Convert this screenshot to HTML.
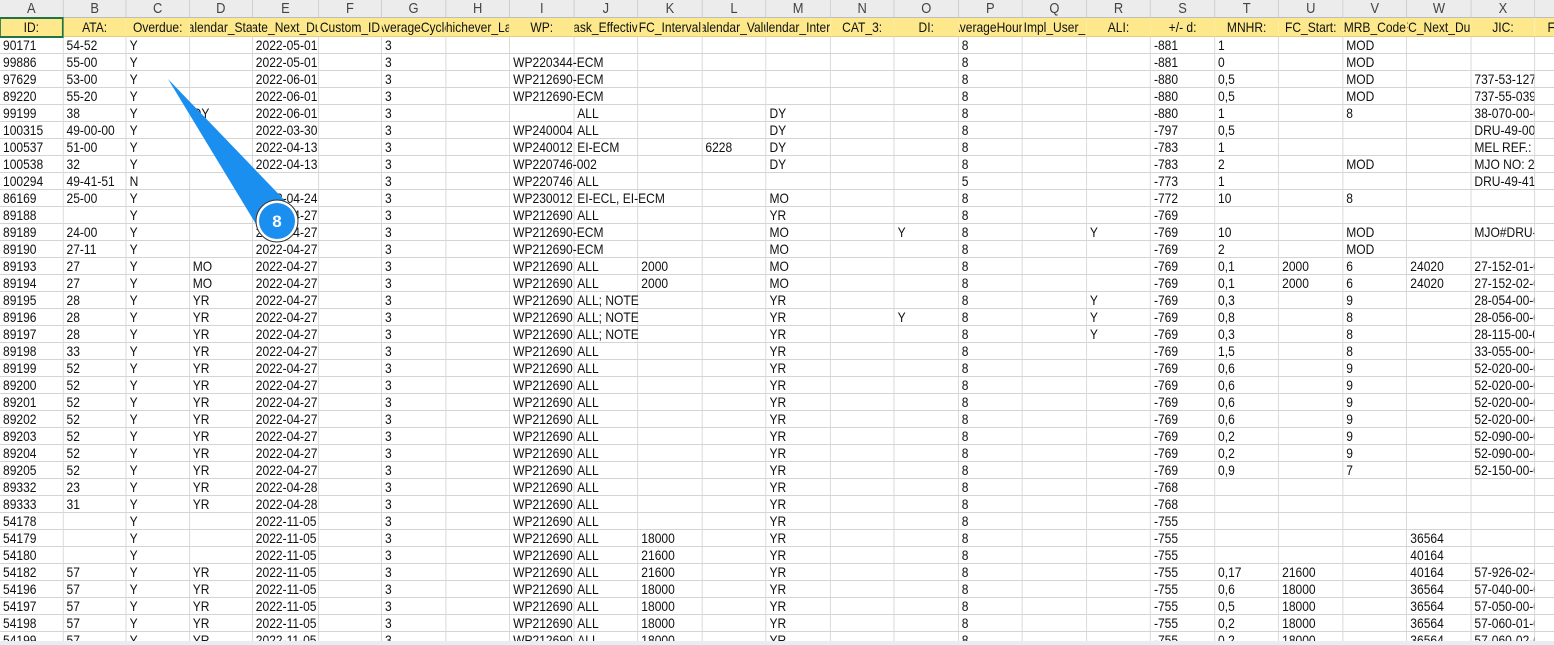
<!DOCTYPE html>
<html><head><meta charset="utf-8">
<style>
html,body{margin:0;padding:0;background:#fff;width:1554px;height:645px;overflow:hidden}
body{position:relative;font-family:"Liberation Sans",Arial,sans-serif}
table{border-collapse:collapse;table-layout:fixed;position:absolute;left:0;top:0;width:1860px;transform:scaleX(0.86);transform-origin:0 0}
td{height:16px;padding:0 0 0 3.5px;border-right:1px solid #d4d4d4;border-bottom:1px solid #d4d4d4;font-size:14px;color:#111;white-space:nowrap;overflow:hidden;line-height:16px}
td.v{overflow:visible}
tr.L td{height:17px;background:#ececec;color:#444;text-align:center;padding:0;font-size:15px;border-right:1px solid #c8c8c8;border-bottom:1px solid #bdbdbd}
tr.H td{height:18px;background:#fde98b;padding:0;border-right:1px solid #fde98b;border-bottom:1px solid #e0cf80}
tr.H td div{display:flex;justify-content:center;overflow:hidden;white-space:nowrap}
tr.H td.sel{outline:2px solid #217346;outline-offset:-1px}
.bot{position:absolute;left:0;top:641px;width:1554px;height:4px;background:#e8edf3}
</style></head><body>
<table>
<colgroup><col style="width:73.26px"><col style="width:73.26px"><col style="width:73.26px"><col style="width:73.26px"><col style="width:76.74px"><col style="width:73.26px"><col style="width:74.42px"><col style="width:74.42px"><col style="width:74.42px"><col style="width:74.42px"><col style="width:74.42px"><col style="width:74.42px"><col style="width:74.42px"><col style="width:74.42px"><col style="width:74.42px"><col style="width:74.42px"><col style="width:74.42px"><col style="width:74.42px"><col style="width:74.42px"><col style="width:74.42px"><col style="width:74.42px"><col style="width:74.42px"><col style="width:74.42px"><col style="width:74.42px"><col style="width:74.42px"></colgroup>
<tr class="L"><td>A</td><td>B</td><td>C</td><td>D</td><td>E</td><td>F</td><td>G</td><td>H</td><td>I</td><td>J</td><td>K</td><td>L</td><td>M</td><td>N</td><td>O</td><td>P</td><td>Q</td><td>R</td><td>S</td><td>T</td><td>U</td><td>V</td><td>W</td><td>X</td><td>Y</td></tr>
<tr class="H"><td class="sel"><div>ID:</div></td><td><div>ATA:</div></td><td><div>Overdue:</div></td><td><div>Calendar_State</div></td><td><div>Date_Next_Due</div></td><td><div>Custom_ID</div></td><td><div>AverageCycle</div></td><td><div>Whichever_Last</div></td><td><div>WP:</div></td><td><div>Task_Effective</div></td><td><div>FC_Interval</div></td><td><div>Calendar_Value</div></td><td><div>Calendar_Interval</div></td><td><div>CAT_3:</div></td><td><div>DI:</div></td><td><div>AverageHours</div></td><td><div>Impl_User_</div></td><td><div>ALI:</div></td><td><div>+/- d:</div></td><td><div>MNHR:</div></td><td><div>FC_Start:</div></td><td><div>MRB_Code</div></td><td><div>FC_Next_Due</div></td><td><div>JIC:</div></td><td style="text-align:left"><div style="justify-content:flex-start;padding-left:14px">FH</div></td></tr>
<tr><td>90171</td><td>54-52</td><td>Y</td><td></td><td>2022-05-01</td><td></td><td>3</td><td></td><td></td><td></td><td></td><td></td><td></td><td></td><td></td><td>8</td><td></td><td></td><td>-881</td><td>1</td><td></td><td>MOD</td><td></td><td></td><td></td></tr>
<tr><td>99886</td><td>55-00</td><td>Y</td><td></td><td>2022-05-01</td><td></td><td>3</td><td></td><td class="v">WP220344-ECM</td><td></td><td></td><td></td><td></td><td></td><td></td><td>8</td><td></td><td></td><td>-881</td><td>0</td><td></td><td>MOD</td><td></td><td></td><td></td></tr>
<tr><td>97629</td><td>53-00</td><td>Y</td><td></td><td>2022-06-01</td><td></td><td>3</td><td></td><td class="v">WP212690-ECM</td><td></td><td></td><td></td><td></td><td></td><td></td><td>8</td><td></td><td></td><td>-880</td><td>0,5</td><td></td><td>MOD</td><td></td><td>737-53-127-00</td><td></td></tr>
<tr><td>89220</td><td>55-20</td><td>Y</td><td></td><td>2022-06-01</td><td></td><td>3</td><td></td><td class="v">WP212690-ECM</td><td></td><td></td><td></td><td></td><td></td><td></td><td>8</td><td></td><td></td><td>-880</td><td>0,5</td><td></td><td>MOD</td><td></td><td>737-55-039-00</td><td></td></tr>
<tr><td>99199</td><td>38</td><td>Y</td><td>DY</td><td>2022-06-01</td><td></td><td>3</td><td></td><td></td><td>ALL</td><td></td><td></td><td>DY</td><td></td><td></td><td>8</td><td></td><td></td><td>-880</td><td>1</td><td></td><td>8</td><td></td><td>38-070-00-01</td><td></td></tr>
<tr><td>100315</td><td>49-00-00</td><td>Y</td><td></td><td>2022-03-30</td><td></td><td>3</td><td></td><td>WP240004</td><td>ALL</td><td></td><td></td><td>DY</td><td></td><td></td><td>8</td><td></td><td></td><td>-797</td><td>0,5</td><td></td><td></td><td></td><td>DRU-49-00</td><td></td></tr>
<tr><td>100537</td><td>51-00</td><td>Y</td><td></td><td>2022-04-13</td><td></td><td>3</td><td></td><td>WP240012</td><td>EI-ECM</td><td></td><td>6228</td><td>DY</td><td></td><td></td><td>8</td><td></td><td></td><td>-783</td><td>1</td><td></td><td></td><td></td><td>MEL REF.: 25</td><td></td></tr>
<tr><td>100538</td><td>32</td><td>Y</td><td></td><td>2022-04-13</td><td></td><td>3</td><td></td><td class="v">WP220746-002</td><td></td><td></td><td></td><td>DY</td><td></td><td></td><td>8</td><td></td><td></td><td>-783</td><td>2</td><td></td><td>MOD</td><td></td><td>MJO NO: 201</td><td></td></tr>
<tr><td>100294</td><td>49-41-51</td><td>N</td><td></td><td></td><td></td><td>3</td><td></td><td>WP220746</td><td>ALL</td><td></td><td></td><td></td><td></td><td></td><td>5</td><td></td><td></td><td>-773</td><td>1</td><td></td><td></td><td></td><td>DRU-49-41</td><td></td></tr>
<tr><td>86169</td><td>25-00</td><td>Y</td><td></td><td>2022-04-24</td><td></td><td>3</td><td></td><td>WP230012</td><td class="v">EI-ECL, EI-ECM</td><td></td><td></td><td>MO</td><td></td><td></td><td>8</td><td></td><td></td><td>-772</td><td>10</td><td></td><td>8</td><td></td><td></td><td></td></tr>
<tr><td>89188</td><td></td><td>Y</td><td></td><td>2022-04-27</td><td></td><td>3</td><td></td><td>WP212690</td><td>ALL</td><td></td><td></td><td>YR</td><td></td><td></td><td>8</td><td></td><td></td><td>-769</td><td></td><td></td><td></td><td></td><td></td><td></td></tr>
<tr><td>89189</td><td>24-00</td><td>Y</td><td></td><td>2022-04-27</td><td></td><td>3</td><td></td><td class="v">WP212690-ECM</td><td></td><td></td><td></td><td>MO</td><td></td><td>Y</td><td>8</td><td></td><td>Y</td><td>-769</td><td>10</td><td></td><td>MOD</td><td></td><td>MJO#DRU-04</td><td></td></tr>
<tr><td>89190</td><td>27-11</td><td>Y</td><td></td><td>2022-04-27</td><td></td><td>3</td><td></td><td class="v">WP212690-ECM</td><td></td><td></td><td></td><td>MO</td><td></td><td></td><td>8</td><td></td><td></td><td>-769</td><td>2</td><td></td><td>MOD</td><td></td><td></td><td></td></tr>
<tr><td>89193</td><td>27</td><td>Y</td><td>MO</td><td>2022-04-27</td><td></td><td>3</td><td></td><td>WP212690</td><td>ALL</td><td>2000</td><td></td><td>MO</td><td></td><td></td><td>8</td><td></td><td></td><td>-769</td><td>0,1</td><td>2000</td><td>6</td><td>24020</td><td>27-152-01-01</td><td></td></tr>
<tr><td>89194</td><td>27</td><td>Y</td><td>MO</td><td>2022-04-27</td><td></td><td>3</td><td></td><td>WP212690</td><td>ALL</td><td>2000</td><td></td><td>MO</td><td></td><td></td><td>8</td><td></td><td></td><td>-769</td><td>0,1</td><td>2000</td><td>6</td><td>24020</td><td>27-152-02-01</td><td></td></tr>
<tr><td>89195</td><td>28</td><td>Y</td><td>YR</td><td>2022-04-27</td><td></td><td>3</td><td></td><td>WP212690</td><td class="v">ALL; NOTE</td><td></td><td></td><td>YR</td><td></td><td></td><td>8</td><td></td><td>Y</td><td>-769</td><td>0,3</td><td></td><td>9</td><td></td><td>28-054-00-01</td><td></td></tr>
<tr><td>89196</td><td>28</td><td>Y</td><td>YR</td><td>2022-04-27</td><td></td><td>3</td><td></td><td>WP212690</td><td class="v">ALL; NOTE</td><td></td><td></td><td>YR</td><td></td><td>Y</td><td>8</td><td></td><td>Y</td><td>-769</td><td>0,8</td><td></td><td>8</td><td></td><td>28-056-00-01</td><td></td></tr>
<tr><td>89197</td><td>28</td><td>Y</td><td>YR</td><td>2022-04-27</td><td></td><td>3</td><td></td><td>WP212690</td><td class="v">ALL; NOTE</td><td></td><td></td><td>YR</td><td></td><td></td><td>8</td><td></td><td>Y</td><td>-769</td><td>0,3</td><td></td><td>8</td><td></td><td>28-115-00-01</td><td></td></tr>
<tr><td>89198</td><td>33</td><td>Y</td><td>YR</td><td>2022-04-27</td><td></td><td>3</td><td></td><td>WP212690</td><td>ALL</td><td></td><td></td><td>YR</td><td></td><td></td><td>8</td><td></td><td></td><td>-769</td><td>1,5</td><td></td><td>8</td><td></td><td>33-055-00-01</td><td></td></tr>
<tr><td>89199</td><td>52</td><td>Y</td><td>YR</td><td>2022-04-27</td><td></td><td>3</td><td></td><td>WP212690</td><td>ALL</td><td></td><td></td><td>YR</td><td></td><td></td><td>8</td><td></td><td></td><td>-769</td><td>0,6</td><td></td><td>9</td><td></td><td>52-020-00-01</td><td></td></tr>
<tr><td>89200</td><td>52</td><td>Y</td><td>YR</td><td>2022-04-27</td><td></td><td>3</td><td></td><td>WP212690</td><td>ALL</td><td></td><td></td><td>YR</td><td></td><td></td><td>8</td><td></td><td></td><td>-769</td><td>0,6</td><td></td><td>9</td><td></td><td>52-020-00-02</td><td></td></tr>
<tr><td>89201</td><td>52</td><td>Y</td><td>YR</td><td>2022-04-27</td><td></td><td>3</td><td></td><td>WP212690</td><td>ALL</td><td></td><td></td><td>YR</td><td></td><td></td><td>8</td><td></td><td></td><td>-769</td><td>0,6</td><td></td><td>9</td><td></td><td>52-020-00-03</td><td></td></tr>
<tr><td>89202</td><td>52</td><td>Y</td><td>YR</td><td>2022-04-27</td><td></td><td>3</td><td></td><td>WP212690</td><td>ALL</td><td></td><td></td><td>YR</td><td></td><td></td><td>8</td><td></td><td></td><td>-769</td><td>0,6</td><td></td><td>9</td><td></td><td>52-020-00-04</td><td></td></tr>
<tr><td>89203</td><td>52</td><td>Y</td><td>YR</td><td>2022-04-27</td><td></td><td>3</td><td></td><td>WP212690</td><td>ALL</td><td></td><td></td><td>YR</td><td></td><td></td><td>8</td><td></td><td></td><td>-769</td><td>0,2</td><td></td><td>9</td><td></td><td>52-090-00-01</td><td></td></tr>
<tr><td>89204</td><td>52</td><td>Y</td><td>YR</td><td>2022-04-27</td><td></td><td>3</td><td></td><td>WP212690</td><td>ALL</td><td></td><td></td><td>YR</td><td></td><td></td><td>8</td><td></td><td></td><td>-769</td><td>0,2</td><td></td><td>9</td><td></td><td>52-090-00-02</td><td></td></tr>
<tr><td>89205</td><td>52</td><td>Y</td><td>YR</td><td>2022-04-27</td><td></td><td>3</td><td></td><td>WP212690</td><td>ALL</td><td></td><td></td><td>YR</td><td></td><td></td><td>8</td><td></td><td></td><td>-769</td><td>0,9</td><td></td><td>7</td><td></td><td>52-150-00-01</td><td></td></tr>
<tr><td>89332</td><td>23</td><td>Y</td><td>YR</td><td>2022-04-28</td><td></td><td>3</td><td></td><td>WP212690</td><td>ALL</td><td></td><td></td><td>YR</td><td></td><td></td><td>8</td><td></td><td></td><td>-768</td><td></td><td></td><td></td><td></td><td></td><td></td></tr>
<tr><td>89333</td><td>31</td><td>Y</td><td>YR</td><td>2022-04-28</td><td></td><td>3</td><td></td><td>WP212690</td><td>ALL</td><td></td><td></td><td>YR</td><td></td><td></td><td>8</td><td></td><td></td><td>-768</td><td></td><td></td><td></td><td></td><td></td><td></td></tr>
<tr><td>54178</td><td></td><td>Y</td><td></td><td>2022-11-05</td><td></td><td>3</td><td></td><td>WP212690</td><td>ALL</td><td></td><td></td><td>YR</td><td></td><td></td><td>8</td><td></td><td></td><td>-755</td><td></td><td></td><td></td><td></td><td></td><td></td></tr>
<tr><td>54179</td><td></td><td>Y</td><td></td><td>2022-11-05</td><td></td><td>3</td><td></td><td>WP212690</td><td>ALL</td><td>18000</td><td></td><td>YR</td><td></td><td></td><td>8</td><td></td><td></td><td>-755</td><td></td><td></td><td></td><td>36564</td><td></td><td></td></tr>
<tr><td>54180</td><td></td><td>Y</td><td></td><td>2022-11-05</td><td></td><td>3</td><td></td><td>WP212690</td><td>ALL</td><td>21600</td><td></td><td>YR</td><td></td><td></td><td>8</td><td></td><td></td><td>-755</td><td></td><td></td><td></td><td>40164</td><td></td><td></td></tr>
<tr><td>54182</td><td>57</td><td>Y</td><td>YR</td><td>2022-11-05</td><td></td><td>3</td><td></td><td>WP212690</td><td>ALL</td><td>21600</td><td></td><td>YR</td><td></td><td></td><td>8</td><td></td><td></td><td>-755</td><td>0,17</td><td>21600</td><td></td><td>40164</td><td>57-926-02-01</td><td></td></tr>
<tr><td>54196</td><td>57</td><td>Y</td><td>YR</td><td>2022-11-05</td><td></td><td>3</td><td></td><td>WP212690</td><td>ALL</td><td>18000</td><td></td><td>YR</td><td></td><td></td><td>8</td><td></td><td></td><td>-755</td><td>0,6</td><td>18000</td><td></td><td>36564</td><td>57-040-00-01</td><td></td></tr>
<tr><td>54197</td><td>57</td><td>Y</td><td>YR</td><td>2022-11-05</td><td></td><td>3</td><td></td><td>WP212690</td><td>ALL</td><td>18000</td><td></td><td>YR</td><td></td><td></td><td>8</td><td></td><td></td><td>-755</td><td>0,5</td><td>18000</td><td></td><td>36564</td><td>57-050-00-01</td><td></td></tr>
<tr><td>54198</td><td>57</td><td>Y</td><td>YR</td><td>2022-11-05</td><td></td><td>3</td><td></td><td>WP212690</td><td>ALL</td><td>18000</td><td></td><td>YR</td><td></td><td></td><td>8</td><td></td><td></td><td>-755</td><td>0,2</td><td>18000</td><td></td><td>36564</td><td>57-060-01-01</td><td></td></tr>
<tr><td>54199</td><td>57</td><td>Y</td><td>YR</td><td>2022-11-05</td><td></td><td>3</td><td></td><td>WP212690</td><td>ALL</td><td>18000</td><td></td><td>YR</td><td></td><td></td><td>8</td><td></td><td></td><td>-755</td><td>0,2</td><td>18000</td><td></td><td>36564</td><td>57-060-02-01</td><td></td></tr>
</table>
<div class="bot"></div>
<svg style="position:absolute;left:0;top:0" width="1554" height="645">
<polygon points="168,79 292,208 262,234" fill="#1a8ff0"/>
<circle cx="277" cy="221" r="21" fill="#fff" stroke="#333" stroke-width="1"/>
<circle cx="277" cy="221" r="18" fill="#1a8ff0"/>
<text x="277" y="227" text-anchor="middle" font-family="Liberation Sans, sans-serif" font-weight="bold" font-size="17" fill="#fff">8</text>
</svg>
</body></html>
